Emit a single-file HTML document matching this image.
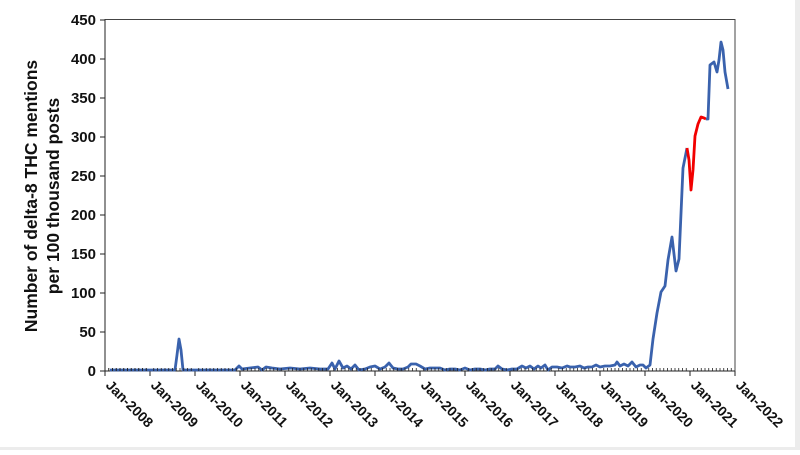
<!DOCTYPE html>
<html><head><meta charset="utf-8"><style>
html,body{margin:0;padding:0;background:#fff;}
svg text{font-family:"Liberation Sans",Arial,sans-serif;font-weight:bold;fill:#111;}
</style></head><body>
<svg width="800" height="450" viewBox="0 0 800 450" xmlns="http://www.w3.org/2000/svg">
<rect x="0" y="0" width="800" height="450" fill="#fff"/>
<rect x="795" y="0" width="5" height="450" fill="#ececec"/>
<rect x="0" y="447" width="800" height="3" fill="#ececec"/>
<!-- frame -->
<rect x="105" y="19.5" width="630" height="351.5" fill="none" stroke="#444" stroke-width="1"/>
<g stroke="#222" stroke-width="1">
<line x1="105" y1="19.5" x2="105" y2="371"/>
<line x1="105" y1="371" x2="735" y2="371"/>
</g>
<!-- y ticks -->
<g stroke="#222" stroke-width="1">
<line x1="100" y1="20" x2="105" y2="20"/><line x1="100" y1="59" x2="105" y2="59"/>
<line x1="100" y1="98" x2="105" y2="98"/><line x1="100" y1="137" x2="105" y2="137"/>
<line x1="100" y1="176" x2="105" y2="176"/><line x1="100" y1="215" x2="105" y2="215"/>
<line x1="100" y1="254" x2="105" y2="254"/><line x1="100" y1="293" x2="105" y2="293"/>
<line x1="100" y1="332" x2="105" y2="332"/><line x1="100" y1="371" x2="105" y2="371"/>
</g>
<g font-size="15" text-anchor="end">
<text x="96" y="25">450</text><text x="96" y="64">400</text><text x="96" y="103">350</text>
<text x="96" y="142">300</text><text x="96" y="181">250</text><text x="96" y="220">200</text>
<text x="96" y="259">150</text><text x="96" y="298">100</text><text x="96" y="337">50</text>
<text x="96" y="376">0</text>
</g>
<g font-size="17.5" text-anchor="middle">
<text transform="translate(37,196) rotate(-90)">Number of delta-8 THC mentions</text>
<text transform="translate(59,196) rotate(-90)">per 100 thousand posts</text>
</g>
<!-- x ticks -->
<g stroke="#222" stroke-width="1" id="xt">
<path d="M105 371v5M150 371v5M195 371v5M240 371v5M285 371v5M330 371v5M375 371v5M420 371v5M465 371v5M510 371v5M555 371v5M600 371v5M645 371v5M690 371v5M735 371v5"/>
</g>
<path id="minor" stroke="#222" stroke-width="1" fill="none" d=""/>
<g font-size="14">
<text transform="translate(105,386) rotate(45)">Jan-2008</text>
<text transform="translate(150,386) rotate(45)">Jan-2009</text>
<text transform="translate(195,386) rotate(45)">Jan-2010</text>
<text transform="translate(240,386) rotate(45)">Jan-2011</text>
<text transform="translate(285,386) rotate(45)">Jan-2012</text>
<text transform="translate(330,386) rotate(45)">Jan-2013</text>
<text transform="translate(375,386) rotate(45)">Jan-2014</text>
<text transform="translate(420,386) rotate(45)">Jan-2015</text>
<text transform="translate(465,386) rotate(45)">Jan-2016</text>
<text transform="translate(510,386) rotate(45)">Jan-2017</text>
<text transform="translate(555,386) rotate(45)">Jan-2018</text>
<text transform="translate(600,386) rotate(45)">Jan-2019</text>
<text transform="translate(645,386) rotate(45)">Jan-2020</text>
<text transform="translate(690,386) rotate(45)">Jan-2021</text>
<text transform="translate(735,386) rotate(45)">Jan-2022</text>
</g>
<!-- data -->
<polyline fill="none" stroke="#3a62ad" stroke-width="2.8" stroke-linejoin="round" points="
110,370 125,370 140,370 155,370 170,370 175,370 177,355 179,339 181,350 183,370 195,370 210,370 225,370 235,370 239,366 242,369 250,368 258,367 262,370 266,367 272,368 280,369 290,368 300,369 310,368 320,369 328,369 332,363 335,369 339,361 343,368 347,366 351,369 355,365 359,370 365,369 370,367 375,366 380,369 385,367 389,363 393,368 398,369 403,369 408,367 411,364 416,364 420,366 425,369 430,368 435,368 440,368 445,370 450,369 455,369 460,370 465,368 470,370 475,369 480,369 485,370 490,369 495,369 498,366 502,369 507,370 512,369 517,369 522,366 526,368 530,366 534,369 538,366 541,368 545,365 548,370 552,367 557,367 562,368 567,366 570,367 575,367 580,366 584,368 588,367 592,367 596,365 600,367 605,366 610,366 615,365 617,362 620,366 624,364 628,366 632,362 636,367 640,365 643,365 646,368 650,365 653,339 657,313 661,292 665,286 668,260 672,237 676,271 679,259 683,168 687,148"/>
<polyline fill="none" stroke="#f20000" stroke-width="2.8" stroke-linejoin="round" points="687,148 689,160 691,190 693,170 695,136 698,124 701,117 704,118 706,119"/>
<polyline fill="none" stroke="#3a62ad" stroke-width="2.8" stroke-linejoin="round" points="706,119 708,119 710,65 714,62 717,72 719,60 721,42 723,50 725,72 728,89"/>
<!-- minor ticks -->
<g stroke="#222" stroke-width="0.8">
<path d="M108.75 371v-3M112.5 371v-3M116.25 371v-3M120 371v-3M123.75 371v-3M127.5 371v-3M131.25 371v-3M135 371v-3M138.75 371v-3M142.5 371v-3M146.25 371v-3"/>
</g>
<g stroke="#222" stroke-width="0.8">
<use href="#m"/>
</g>
<defs><path id="m" d="M108.75 371v-3M112.5 371v-3M116.25 371v-3M120 371v-3M123.75 371v-3M127.5 371v-3M131.25 371v-3M135 371v-3M138.75 371v-3M142.5 371v-3M146.25 371v-3"/></defs>
<g stroke="#222" stroke-width="0.8">
<use href="#m" x="45"/><use href="#m" x="90"/><use href="#m" x="135"/><use href="#m" x="180"/><use href="#m" x="225"/><use href="#m" x="270"/><use href="#m" x="315"/><use href="#m" x="360"/><use href="#m" x="405"/><use href="#m" x="450"/><use href="#m" x="495"/><use href="#m" x="540"/><use href="#m" x="585"/>
</g>
</svg>
</body></html>
